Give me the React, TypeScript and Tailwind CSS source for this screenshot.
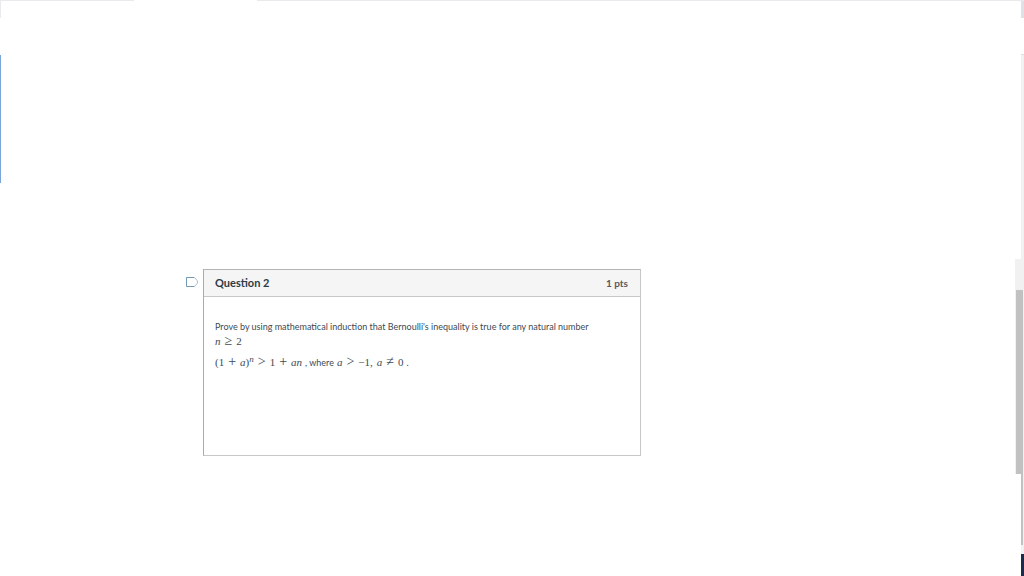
import type { ReactNode } from "react"

function Var({ children }: { children: ReactNode }) {
  return <i>{children}</i>
}

function Op({ children }: { children: ReactNode }) {
  return <span className="text-[14px] leading-none">{children}</span>
}

function MathText({ children }: { children: ReactNode }) {
  return (
    <span className="inline-flex items-baseline gap-1 font-['Liberation_Serif',serif] text-[11px] leading-4">
      {children}
    </span>
  )
}

function FlagButton() {
  return (
    <button type="button" aria-label="Flag question" className="mt-2 h-[10px] w-3 shrink-0">
      <svg viewBox="0 0 12 10" width="12" height="10" fill="none">
        <path d="M8.5 0.5H0.5V9.5H8.5" stroke="#7398b5" />
        <path d="M8.5 0.5L11.5 4V6L8.5 9.5" stroke="#a9c4d8" />
      </svg>
    </button>
  )
}

function QuestionCard() {
  return (
    <article className="min-w-0 flex-1 border border-[#c7c7c7] border-t-[#b4b4b4] border-l-[#aaaaaa] bg-white">
      <header className="flex h-[27px] items-center justify-between border-b border-[#c7c7c7] bg-[#f5f5f5] pr-3 pb-px pl-[11px] font-bold">
        <h2 className="text-[11px] leading-4">Question 2</h2>
        <span className="text-[10px] leading-4 text-[#595959]">1 pts</span>
      </header>
      <div className="min-h-[158px] pt-[22px] pr-3 pl-[11px] text-[9px] leading-4 text-[#3d4a54]">
        <p>Prove by using mathematical induction that Bernoulli's inequality is true for any natural number</p>
        <p className="-mt-0.5">
          <MathText>
            <Var>n</Var>
            <Op>≥</Op>
            <span>2</span>
          </MathText>
        </p>
        <p className="mt-1 flex items-baseline gap-[3px]">
          <MathText>
            <span>(1</span>
            <Op>+</Op>
            <span>
              <Var>a</Var>)<sup className="text-[9px] leading-none"><Var>n</Var></sup>
            </span>
            <Op>&gt;</Op>
            <span>1</span>
            <Op>+</Op>
            <Var>an</Var>
          </MathText>
          <span>, where</span>
          <MathText>
            <Var>a</Var>
            <Op>&gt;</Op>
            <span>−1,</span>
            <Var>a</Var>
            <Op>≠</Op>
            <span>0</span>
          </MathText>
          <span>.</span>
        </p>
      </div>
    </article>
  )
}

export default function App() {
  return (
    <div className="flex min-h-screen flex-col bg-white font-['Lato',sans-serif] text-[#2d3b45]">
      {/* TOP EDGE */}
      <div className="flex h-px">
        <div className="w-[134px] bg-[#e8eaee]" />
        <div className="w-[123px]" />
        <div className="flex-1 bg-[#e8eaee]" />
      </div>

      <div className="flex flex-1">
        {/* LEFT EDGE */}
        <div className="w-px shrink-0">
          <div className="h-[17px] bg-[#e8eaee]" />
          <div className="mt-[37px] h-32 bg-[#7ba7d7]" />
        </div>

        <main className="flex min-w-0 flex-1 items-start gap-[5px] pt-[268px] pr-[374px] pl-[185px]">
          <FlagButton />
          <QuestionCard />
        </main>

        {/* RIGHT EDGE */}
        <div className="flex w-[9px] shrink-0 flex-col items-end">
          <div className="h-[17px] w-[3px] bg-[#dee1e6]" />
          <div className="mt-9 h-[205px] w-[3px] border-t border-[#dddddd] bg-[#f1f1f1]" />
          <div className="h-[31px] w-full bg-[#f1f1f1]" />
          <div className="h-[184px] w-full border-x border-[#f1f1f1] bg-[#c1c1c1]" />
          <div className="h-[71px] w-[3px] border-r border-[#f1f1f1] bg-[#c1c1c1]" />
          <div className="h-[9px] w-[3px] bg-[#f1f1f1]" />
          <div className="w-[3px] flex-1 bg-[#1c2b4a]" />
        </div>
      </div>
    </div>
  )
}
